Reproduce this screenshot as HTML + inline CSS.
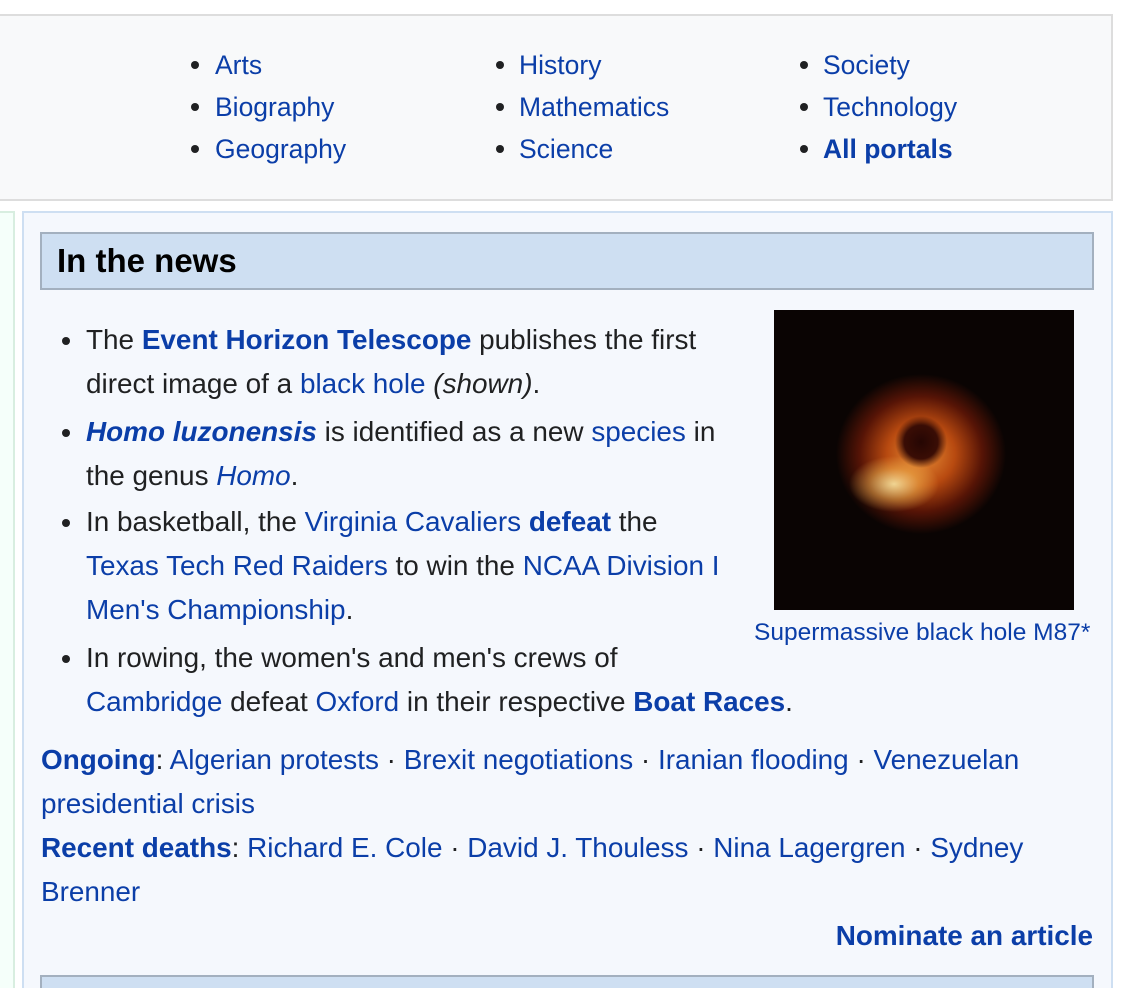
<!DOCTYPE html>
<html><head><meta charset="utf-8"><style>
html,body{margin:0;width:1130px;height:988px;overflow:hidden}
body{background:#fff;font-family:"Liberation Sans",Arial,sans-serif;color:#202122;position:relative;font-size:27.9px}
a{color:#0b3ea8;text-decoration:none}
.abs{position:absolute;white-space:nowrap;line-height:30px}
.b{font-weight:bold}
.dot{position:absolute;width:8px;height:8px;border-radius:50%;background:#202122}
.p{font-size:26.5px}
</style></head><body>
<div style="position:absolute;left:-2px;top:14px;width:1111px;height:183px;background:#f8f9fa;border:2px solid #ddd"></div>
<div style="position:absolute;left:-2px;top:211px;width:13px;height:790px;background:#f5fffa;border:2px solid #d8eee0"></div>
<div style="position:absolute;left:22px;top:211px;width:1087px;height:790px;background:#f5f8fd;border:2px solid #cedff2"></div>
<div style="position:absolute;left:40px;top:232px;width:1050px;height:54px;background:#cedff2;border:2px solid #a3b0bf"></div>
<div style="position:absolute;left:40px;top:975px;width:1050px;height:20px;background:#cedff2;border:2px solid #a3b0bf"></div>

<div class="dot" style="left:191px;top:61px"></div><div class="abs p" style="left:215px;top:50px"><a>Arts</a></div>
<div class="dot" style="left:191px;top:103px"></div><div class="abs p" style="left:215px;top:92px"><a>Biography</a></div>
<div class="dot" style="left:191px;top:145px"></div><div class="abs p" style="left:215px;top:134px"><a>Geography</a></div>
<div class="dot" style="left:496px;top:61px"></div><div class="abs p" style="left:519px;top:50px"><a>History</a></div>
<div class="dot" style="left:496px;top:103px"></div><div class="abs p" style="left:519px;top:92px"><a>Mathematics</a></div>
<div class="dot" style="left:496px;top:145px"></div><div class="abs p" style="left:519px;top:134px"><a>Science</a></div>
<div class="dot" style="left:800px;top:61px"></div><div class="abs p" style="left:823px;top:50px"><a>Society</a></div>
<div class="dot" style="left:800px;top:103px"></div><div class="abs p" style="left:823px;top:92px"><a>Technology</a></div>
<div class="dot" style="left:800px;top:145px"></div><div class="abs p" style="left:823px;top:134px"><a class="b">All portals</a></div>

<div class="abs b" style="left:57px;top:244px;font-size:33px;line-height:34px;color:#000">In the news</div>

<div class="dot" style="left:62px;top:337px"></div><div class="abs" style="left:86px;top:325px">The <a class="b">Event Horizon Telescope</a> publishes the first</div>
<div class="abs" style="left:86px;top:369px">direct image of a <a>black hole</a> <i>(shown)</i>.</div>
<div class="dot" style="left:62px;top:429px"></div><div class="abs" style="left:86px;top:417px"><a class="b"><i>Homo luzonensis</i></a> is identified as a new <a>species</a> in</div>
<div class="abs" style="left:86px;top:461px">the genus <a><i>Homo</i></a>.</div>
<div class="dot" style="left:62px;top:519px"></div><div class="abs" style="left:86px;top:507px">In basketball, the <a>Virginia Cavaliers</a> <a class="b">defeat</a> the</div>
<div class="abs" style="left:86px;top:551px"><a>Texas Tech Red Raiders</a> to win the <a>NCAA Division I</a></div>
<div class="abs" style="left:86px;top:595px"><a>Men's Championship</a>.</div>
<div class="dot" style="left:62px;top:655px"></div><div class="abs" style="left:86px;top:643px">In rowing, the women's and men's crews of</div>
<div class="abs" style="left:86px;top:687px"><a>Cambridge</a> defeat <a>Oxford</a> in their respective <a class="b">Boat Races</a>.</div>

<div style="position:absolute;left:774px;top:310px;width:300px;height:300px;background:radial-gradient(ellipse 26px 26px at 49% 44%,#250603 0%,#3a0d05 65%,rgba(0,0,0,0) 100%),radial-gradient(ellipse 45px 28px at 40% 58%,rgba(255,240,170,.85) 0%,rgba(255,200,90,.45) 55%,rgba(0,0,0,0) 100%),radial-gradient(ellipse 85px 80px at 49% 48%,#e89038 0%,#b84a10 40%,#561406 72%,#0a0403 100%),radial-gradient(ellipse 60px 40px at 30% 20%,rgba(90,20,8,.5) 0%,rgba(0,0,0,0) 100%),#0a0403"></div>
<div class="abs" style="left:754px;top:619px;font-size:24.5px;line-height:28px"><a>Supermassive black hole M87*</a></div>

<div class="abs" style="left:41px;top:745px"><a class="b">Ongoing</a>: <a>Algerian protests</a> · <a>Brexit negotiations</a> · <a>Iranian flooding</a> · <a>Venezuelan</a></div>
<div class="abs" style="left:41px;top:789px"><a>presidential crisis</a></div>
<div class="abs" style="left:41px;top:833px"><a class="b">Recent deaths</a>: <a>Richard E. Cole</a> · <a>David J. Thouless</a> · <a>Nina Lagergren</a> · <a>Sydney</a></div>
<div class="abs" style="left:41px;top:877px"><a>Brenner</a></div>
<div class="abs" style="right:37px;top:921px"><a class="b">Nominate an article</a></div>
</body></html>
